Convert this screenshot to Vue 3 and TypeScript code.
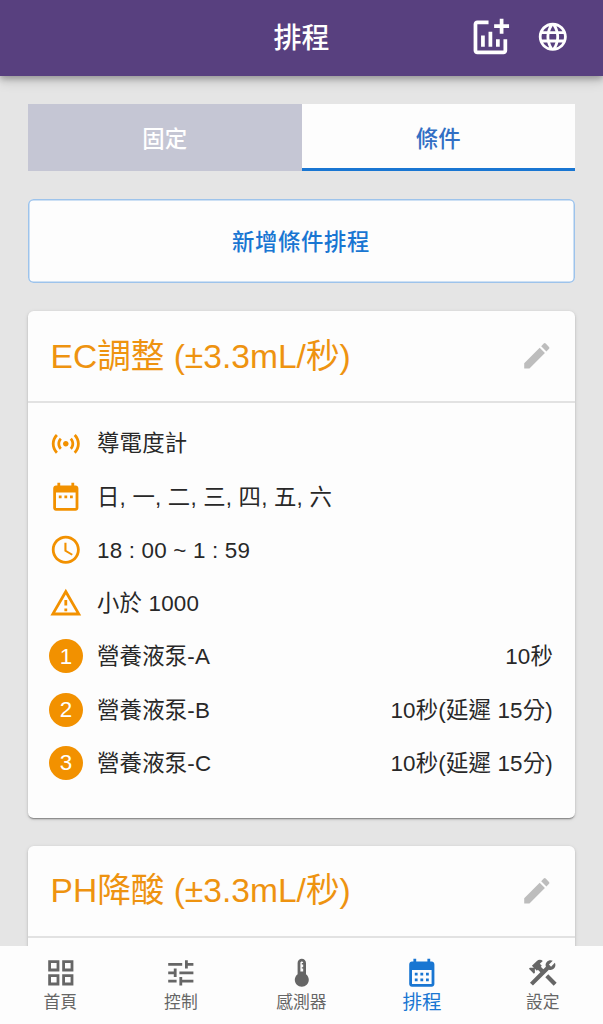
<script setup lang="ts">
interface NavItem {
  label: string
  icon: string
  active?: boolean
}

interface InfoRow {
  icon: string
  text: string
}

interface PumpStep {
  name: string
  duration: string
}

interface Schedule {
  title: string
  info: InfoRow[]
  steps: PumpStep[]
}

const icons: Record<string, string> = {
  addChart:
    'M22 5v2h-3v3h-2V7h-3V5h3V2h2v3h3zm-3 14H5V5h6V3H5c-1.1 0-2 .9-2 2v14c0 1.1.9 2 2 2h14c1.1 0 2-.9 2-2v-6h-2v6zm-4-6v4h2v-4h-2zm-4 4h2V9h-2v8zm-2 0v-6H7v6h2z',
  language:
    'M11.99 2C6.47 2 2 6.48 2 12s4.47 10 9.99 10C17.52 22 22 17.52 22 12S17.52 2 11.99 2zm6.93 6h-2.95c-.32-1.25-.78-2.45-1.38-3.56 1.84.63 3.37 1.91 4.33 3.56zM12 4.04c.83 1.2 1.48 2.53 1.91 3.96h-3.82c.43-1.43 1.08-2.76 1.91-3.96zM4.26 14C4.1 13.36 4 12.69 4 12s.1-1.36.26-2h3.38c-.08.66-.14 1.32-.14 2 0 .68.06 1.34.14 2H4.26zm.82 2h2.95c.32 1.25.78 2.45 1.38 3.56-1.84-.63-3.37-1.9-4.33-3.56zm2.95-8H5.08c.96-1.66 2.49-2.93 4.33-3.56C8.81 5.55 8.35 6.75 8.03 8zM12 19.96c-.83-1.2-1.48-2.53-1.91-3.96h3.82c-.43 1.43-1.08 2.76-1.91 3.96zM14.34 14H9.66c-.09-.66-.16-1.32-.16-2 0-.68.07-1.35.16-2h4.68c.09.65.16 1.32.16 2 0 .68-.07 1.34-.16 2zm.25 5.56c.6-1.11 1.06-2.31 1.38-3.56h2.95c-.96 1.65-2.49 2.93-4.33 3.56zM16.36 14c.08-.66.14-1.32.14-2 0-.68-.06-1.34-.14-2h3.38c.16.64.26 1.31.26 2s-.1 1.36-.26 2h-3.38z',
  edit:
    'M3 17.25V21h3.75L17.81 9.94l-3.75-3.75L3 17.25zM20.71 7.04c.39-.39.39-1.02 0-1.41l-2.34-2.34a.9959.9959 0 0 0-1.41 0l-1.83 1.83 3.75 3.75 1.83-1.83z',
  sensors:
    'M7.76 16.24C6.67 15.16 6 13.66 6 12s.67-3.16 1.76-4.24l1.42 1.42C8.45 9.9 8 10.9 8 12c0 1.1.45 2.1 1.17 2.83l-1.41 1.41zm8.48 0C17.33 15.16 18 13.66 18 12s-.67-3.16-1.76-4.24l-1.42 1.42C15.55 9.9 16 10.9 16 12c0 1.1-.45 2.1-1.17 2.83l1.41 1.41zM12 10c-1.1 0-2 .9-2 2s.9 2 2 2 2-.9 2-2-.9-2-2-2zm8 2c0 2.21-.9 4.21-2.35 5.65l1.42 1.42C20.88 17.26 22 14.76 22 12s-1.12-5.26-2.93-7.07l-1.42 1.42C19.1 7.79 20 9.79 20 12zM6.35 6.35 4.93 4.93C3.12 6.74 2 9.24 2 12s1.12 5.26 2.93 7.07l1.42-1.42C4.9 16.21 4 14.21 4 12s.9-4.21 2.35-5.65z',
  dateRange:
    'M9 11H7v2h2v-2zm4 0h-2v2h2v-2zm4 0h-2v2h2v-2zm2-7h-1V2h-2v2H8V2H6v2H5c-1.11 0-1.99.9-1.99 2L3 20c0 1.1.89 2 2 2h14c1.1 0 2-.9 2-2V6c0-1.1-.9-2-2-2zm0 16H5V9h14v11z',
  clock:
    'M11.99 2C6.47 2 2 6.48 2 12s4.47 10 9.99 10C17.52 22 22 17.52 22 12S17.52 2 11.99 2zM12 20c-4.42 0-8-3.58-8-8s3.58-8 8-8 8 3.58 8 8-3.58 8-8 8zm.5-13H11v6l5.25 3.15.75-1.23-4.5-2.67z',
  warning:
    'M12 5.99 19.53 19H4.47L12 5.99M12 2 1 21h22L12 2zm1 14h-2v2h2v-2zm0-6h-2v4h2v-4z',
  grid:
    'M3 3v8h8V3H3zm6 6H5V5h4v4zm-6 4v8h8v-8H3zm6 6H5v-4h4v4zm4-16v8h8V3h-8zm6 6h-4V5h4v4zm-6 4v8h8v-8h-8zm6 6h-4v-4h4v4z',
  tune:
    'M3 17v2h6v-2H3zM3 5v2h10V5H3zm10 16v-2h8v-2h-8v-2h-2v6h2zM7 9v2H3v2h4v2h2V9H7zm14 4v-2H11v2h10zm-6-4h2V7h4V5h-4V3h-2v6z',
  thermostat:
    'M15 13V5c0-1.66-1.34-3-3-3S9 3.34 9 5v8c-1.21.91-2 2.37-2 4 0 2.76 2.24 5 5 5s5-2.24 5-5c0-1.63-.79-3.09-2-4zm-4-8c0-.55.45-1 1-1s1 .45 1 1h-1v1h1v2h-1v1h1v2h-2V5z',
  calendar:
    'M19 4h-1V2h-2v2H8V2H6v2H5c-1.11 0-1.99.9-1.99 2L3 20c0 1.1.89 2 2 2h14c1.1 0 2-.9 2-2V6c0-1.1-.9-2-2-2zm0 16H5V10h14v10zM9 14H7v-2h2v2zm4 0h-2v-2h2v2zm4 0h-2v-2h2v2zm-8 4H7v-2h2v2zm4 0h-2v-2h2v2zm4 0h-2v-2h2v2z',
  construction:
    'm13.7826 15.1719 2.1213-2.1213 5.9963 5.9962-2.1213 2.1213zM17.5 10c1.93 0 3.5-1.57 3.5-3.5 0-.58-.16-1.12-.41-1.6l-2.7 2.7-1.49-1.49 2.7-2.7c-.48-.25-1.02-.41-1.6-.41C15.57 3 14 4.57 14 6.5c0 .41.08.8.21 1.16l-1.85 1.85-1.78-1.78.71-.71-1.41-1.41L12 3.49c-1.17-1.17-3.07-1.17-4.24 0L4.22 7.03l1.41 1.41H2.81l-.71.71 3.54 3.54.71-.71V9.15l1.41 1.41.71-.71 1.78 1.78-7.41 7.41 2.12 2.12L16.34 9.79c.36.13.75.21 1.16.21z',
}

const schedules: Schedule[] = [
  {
    title: 'EC調整 (±3.3mL/秒)',
    info: [
      { icon: 'sensors', text: '導電度計' },
      { icon: 'dateRange', text: '日, 一, 二, 三, 四, 五, 六' },
      { icon: 'clock', text: '18 : 00 ~ 1 : 59' },
      { icon: 'warning', text: '小於 1000' },
    ],
    steps: [
      { name: '營養液泵-A', duration: '10秒' },
      { name: '營養液泵-B', duration: '10秒(延遲 15分)' },
      { name: '營養液泵-C', duration: '10秒(延遲 15分)' },
    ],
  },
  { title: 'PH降酸 (±3.3mL/秒)', info: [], steps: [] },
]

const navItems: NavItem[] = [
  { label: '首頁', icon: 'grid' },
  { label: '控制', icon: 'tune' },
  { label: '感測器', icon: 'thermostat' },
  { label: '排程', icon: 'calendar', active: true },
  { label: '設定', icon: 'construction' },
]
</script>

<template>
  <div class="screen">
    <header class="app-bar">
      <span class="side"></span>
      <h1 class="page-title">排程</h1>
      <div class="side actions">
        <svg class="icon icon-large" viewBox="0 0 24 24"><path :d="icons.addChart" /></svg>
        <svg class="icon" viewBox="0 0 24 24"><path :d="icons.language" /></svg>
      </div>
    </header>

    <main class="content">
      <div class="tabs">
        <button class="tab">固定</button>
        <button class="tab selected">條件</button>
      </div>

      <button class="add-button">新增條件排程</button>

      <section v-for="schedule in schedules" :key="schedule.title" class="card">
        <div class="card-head">
          <h2 class="card-title">{{ schedule.title }}</h2>
          <svg class="icon edit" viewBox="0 0 24 24"><path :d="icons.edit" /></svg>
        </div>
        <div class="card-body">
          <div v-for="row in schedule.info" :key="row.icon" class="row">
            <span class="lead"><svg class="icon" viewBox="0 0 24 24"><path :d="icons[row.icon]" /></svg></span>
            <span class="row-text">{{ row.text }}</span>
          </div>
          <div v-for="(step, index) in schedule.steps" :key="step.name" class="row">
            <span class="lead"><span class="badge">{{ index + 1 }}</span></span>
            <span class="row-text">{{ step.name }}</span>
            <span class="duration">{{ step.duration }}</span>
          </div>
        </div>
      </section>
    </main>

    <nav class="bottom-nav">
      <div v-for="item in navItems" :key="item.label" class="nav-item" :class="{ active: item.active }">
        <svg class="icon" viewBox="0 0 24 24"><path :d="icons[item.icon]" /></svg>
        <span class="nav-label">{{ item.label }}</span>
      </div>
    </nav>
  </div>
</template>

<style>
body {
  margin: 0;
  background: #e5e5e5;
}
</style>

<style scoped>
.screen {
  display: flex;
  flex-direction: column;
  height: 1024px;
  overflow: hidden;
  background: #e5e5e5;
  color: #282828;
  font-family: "Liberation Sans", "Noto Sans CJK TC", sans-serif;
  font-size: 22.4px;
}

.icon {
  display: block;
  flex: none;
  width: 33.6px;
  height: 33.6px;
  fill: currentColor;
}

.icon-large {
  width: 44.8px;
  height: 44.8px;
}

.app-bar {
  z-index: 1;
  display: flex;
  flex: none;
  align-items: center;
  box-sizing: border-box;
  height: 76px;
  padding: 0 33.5px;
  background: #58407f;
  color: #fff;
  box-shadow: 0 3px 6px rgba(0, 0, 0, 0.25), 0 5px 12px rgba(0, 0, 0, 0.14);
}

.side {
  flex: 1;
}

.page-title {
  margin: 0;
  padding-top: 2px;
  font-size: 28px;
  font-weight: 500;
  line-height: 40px;
}

.actions {
  display: flex;
  align-items: center;
  justify-content: flex-end;
  gap: 23.5px;
  padding-bottom: 2px;
}

.content {
  display: flex;
  flex: 1;
  flex-direction: column;
  gap: 28px;
  min-height: 0;
  padding: 28px 28px 0;
  overflow: hidden;
}

button {
  margin: 0;
  border: 0;
  font: inherit;
}

.tabs {
  display: flex;
  flex: none;
  height: 67.3px;
}

.tab {
  flex: 1;
  box-sizing: border-box;
  padding: 0 0 2px;
  background: #c5c6d4;
  color: #fff;
  font-weight: 500;
}

.tab.selected {
  border-bottom: 3px solid #1976d2;
  padding: 1px 0 0;
  background: #fdfdfd;
  color: #326fc4;
}

.add-button {
  flex: none;
  box-sizing: border-box;
  height: 84px;
  padding: 0 1px 2px 0;
  border-radius: 5.6px;
  background: #fdfdfd;
  box-shadow: inset 0 0 0 1.5px #9dc3eb;
  color: #1976d2;
  font-weight: 500;
  letter-spacing: 0.6px;
}

.card {
  flex: none;
  border-radius: 5.6px;
  background: #fdfdfd;
  box-shadow: 0 2px 1.5px -1px rgba(0, 0, 0, 0.3), 0 1px 2px rgba(0, 0, 0, 0.16), 0 1px 4px rgba(0, 0, 0, 0.1);
}

.card-head {
  display: flex;
  align-items: center;
  justify-content: space-between;
  box-sizing: border-box;
  height: 91.5px;
  padding: 0 21px 0 22.5px;
  border-bottom: 2px solid #e2e2e2;
}

.card-title {
  margin: 0;
  padding-top: 1px;
  color: #ee9310;
  font-size: 33.6px;
  font-weight: 400;
  line-height: 48px;
  white-space: nowrap;
}

.edit {
  color: #bdbdbd;
}

.card-body {
  padding: 14px 22px 28.7px 21px;
}

.row {
  display: flex;
  align-items: center;
  height: 53.25px;
}

.lead {
  display: flex;
  flex: none;
  align-items: center;
  justify-content: center;
  width: 34px;
  margin-right: 14px;
  color: #f29100;
}

.badge {
  display: flex;
  align-items: center;
  justify-content: center;
  box-sizing: border-box;
  width: 34px;
  height: 34px;
  padding-top: 1px;
  border-radius: 50%;
  background: #f29100;
  color: #fff;
}

.row-text,
.duration {
  padding-top: 2px;
  letter-spacing: 0.19px;
  line-height: 34px;
  white-space: nowrap;
}

.duration {
  margin-left: auto;
}

.bottom-nav {
  z-index: 1;
  display: flex;
  flex: none;
  height: 78px;
  background: #fdfdfd;
  color: #666;
}

.nav-item {
  display: flex;
  flex: 1;
  flex-direction: column;
  align-items: center;
  padding-top: 10px;
}

.nav-label {
  font-size: 16.8px;
  line-height: 25px;
}

.active {
  color: #1976d2;
}

.active .nav-label {
  font-size: 19.6px;
}
</style>
